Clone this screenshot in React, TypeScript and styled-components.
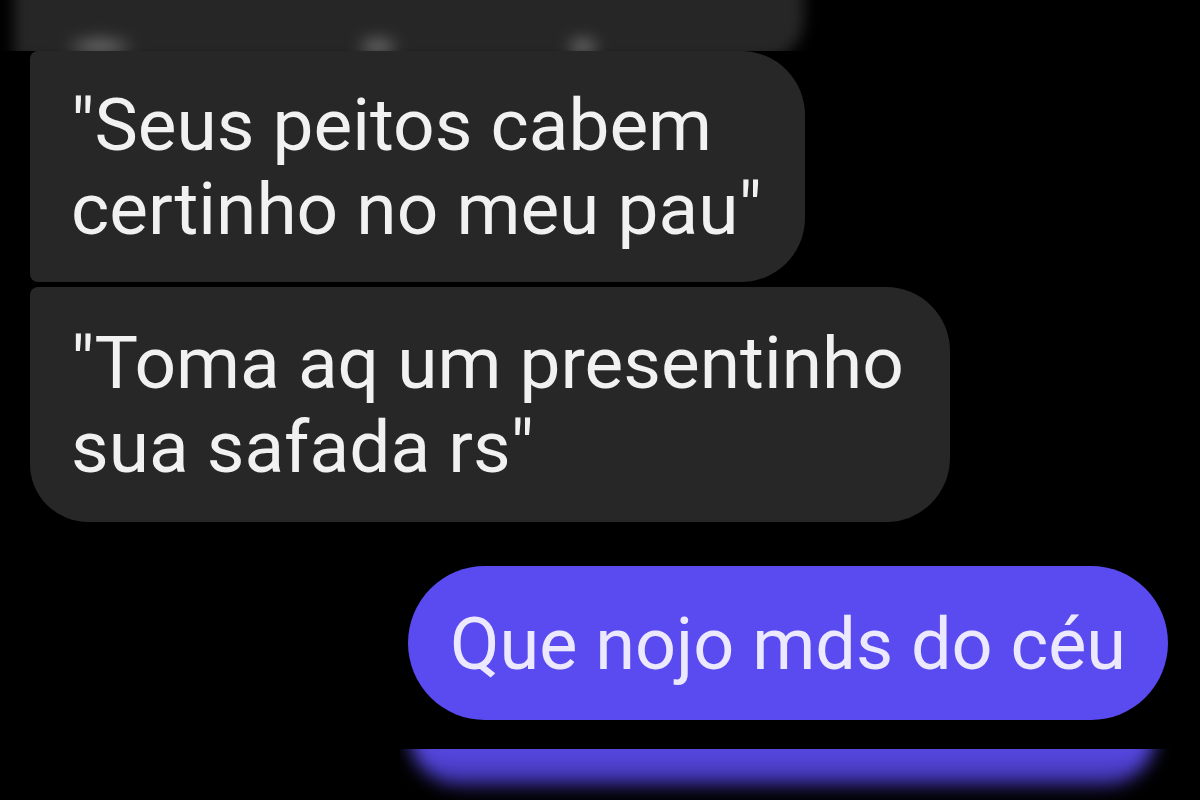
import React from "react";
import styled, { createGlobalStyle } from "styled-components";

const Global = createGlobalStyle`
  html, body { margin: 0; padding: 0; background: #000; }
  body { width: 1200px; height: 800px; overflow: hidden; font-family: Roboto, "Noto Sans", Arial, sans-serif; }
`;

const Thread = styled.div`
  width: 1200px;
  height: 800px;
  background: #000;
  display: flex;
  flex-direction: column;
  overflow: hidden;
`;

const FragmentClip = styled.div<{ $h: number; $w: number; $self?: string }>`
  height: ${(p) => p.$h}px;
  width: ${(p) => p.$w}px;
  align-self: ${(p) => p.$self || "flex-start"};
  overflow: hidden;
  flex-shrink: 0;
  display: flex;
`;

const TopGhost = styled.div`
  box-sizing: border-box;
  flex-shrink: 0;
  width: 790px;
  height: 120px;
  margin: -60px 0 0 14px;
  background: #262626;
  border-radius: 0 30px 40px 0;
  filter: blur(7px);
  display: flex;
  align-items: flex-end;
`;

const Glint = styled.span<{ $x: number; $w: number }>`
  display: block;
  flex-shrink: 0;
  width: ${(p) => p.$w}px;
  height: 26px;
  border-radius: 50%;
  background: radial-gradient(ellipse at center, #6c6c6c 0%, #4a4a4a 45%, rgba(38, 38, 38, 0) 75%);
  margin-left: ${(p) => p.$x}px;
`;

const BottomGhost = styled.div`
  flex-shrink: 0;
  width: 745px;
  height: 96px;
  margin: -60px 0 0 10px;
  background: linear-gradient(#5b4be8 0%, #5446dc 70%, #3d31a8 100%);
  border-radius: 0 0 50px 50px;
  filter: blur(9px);
`;

const Received = styled.div<{ $w: number; $bl: number; $pt: number; $h: number; $mt?: number }>`
  box-sizing: border-box;
  width: ${(p) => p.$w}px;
  height: ${(p) => p.$h}px;
  margin: ${(p) => p.$mt || 0}px 0 0 30px;
  flex-shrink: 0;
  background: #272727;
  border-radius: 8px 64px 64px ${(p) => p.$bl}px;
  padding: ${(p) => p.$pt}px 20px 0 41px;
  color: #f1f1f1;
  font-size: 73px;
  line-height: 84px;
`;

const Line = styled.div`
  white-space: nowrap;
`;

const Sent = styled.div`
  box-sizing: border-box;
  align-self: flex-end;
  flex-shrink: 0;
  width: 760px;
  height: 154px;
  margin: 44px 32px 0 0;
  border-radius: 77px;
  background: #5a4bf0;
  color: #ece9ff;
  font-size: 72px;
  display: flex;
  align-items: center;
  justify-content: center;
  padding-top: 2px;
`;

export default function App() {
  return (
    <>
      <Global />
      <Thread>
        <FragmentClip $h={51} $w={830}>
          <TopGhost>
            <Glint $x={51} $w={70} />
            <Glint $x={221} $w={44} />
            <Glint $x={165} $w={36} />
          </TopGhost>
        </FragmentClip>
        <Received $w={775} $h={231} $bl={8} $pt={32}>
          <Line>"Seus peitos cabem</Line>
          <Line>certinho no meu pau"</Line>
        </Received>
        <Received $w={920} $h={235} $bl={58} $pt={34} $mt={5}>
          <Line>"Toma aq um presentinho</Line>
          <Line>sua safada rs"</Line>
        </Received>
        <Sent>Que nojo mds do céu</Sent>
        <FragmentClip $h={52} $w={770} $self="flex-end" style={{ marginTop: 29, marginRight: 30 }}>
          <BottomGhost />
        </FragmentClip>
      </Thread>
    </>
  );
}
